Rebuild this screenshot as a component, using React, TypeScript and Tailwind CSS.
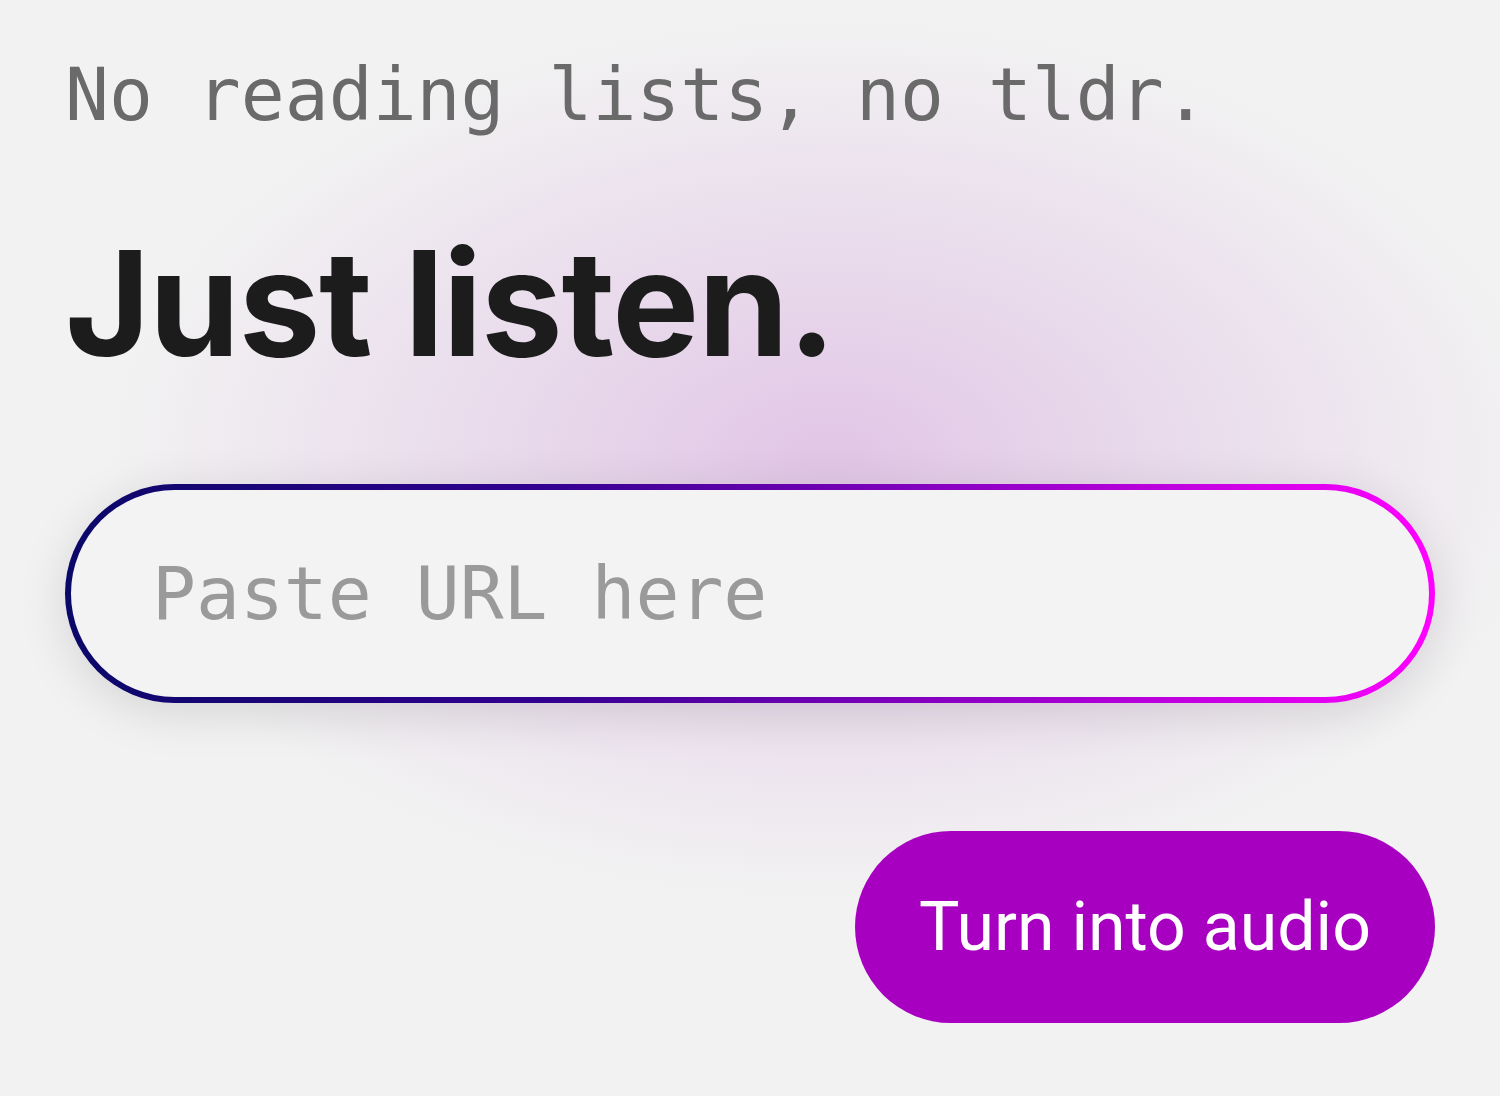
export default function App() {
  return (
    <div className="min-h-screen w-full bg-[#f2f2f2] bg-[radial-gradient(ellipse_720px_440px_at_830px_460px,rgba(222,190,228,0.85),rgba(242,242,242,0)_100%)] overflow-hidden">
      <div className="flex flex-col px-[65px] pt-[50px]">
        <p className="font-['DejaVu_Sans_Mono',monospace] text-[73px] leading-[90px] text-[#6a6a6a]">
          No reading lists, no tldr.
        </p>
        <h1 className="mt-[90px] font-['Inter',sans-serif] font-bold text-[146px] leading-[146px] tracking-[-1.3px] text-[#1c1c1c]">
          Just listen.
        </h1>
        <div className="mt-[108px] rounded-full p-[6px] bg-[linear-gradient(to_right,#0a0868,#320090_35%,#9a00cc_70%,#ff00ff)] shadow-[0_10px_50px_rgba(0,0,0,0.12)]">
          <div className="h-[207px] rounded-full bg-[#f3f3f3] flex items-center pl-[81px]">
            <span className="font-['DejaVu_Sans_Mono',monospace] text-[73px] text-[#9a9a9a]">
              Paste URL here
            </span>
          </div>
        </div>
        <div className="mt-[128px] flex justify-end">
          <button className="h-[192px] w-[580px] rounded-full bg-[#a800c0] flex items-center justify-center font-['Roboto',sans-serif] text-[68px] text-white">
            Turn into audio
          </button>
        </div>
      </div>
    </div>
  );
}
